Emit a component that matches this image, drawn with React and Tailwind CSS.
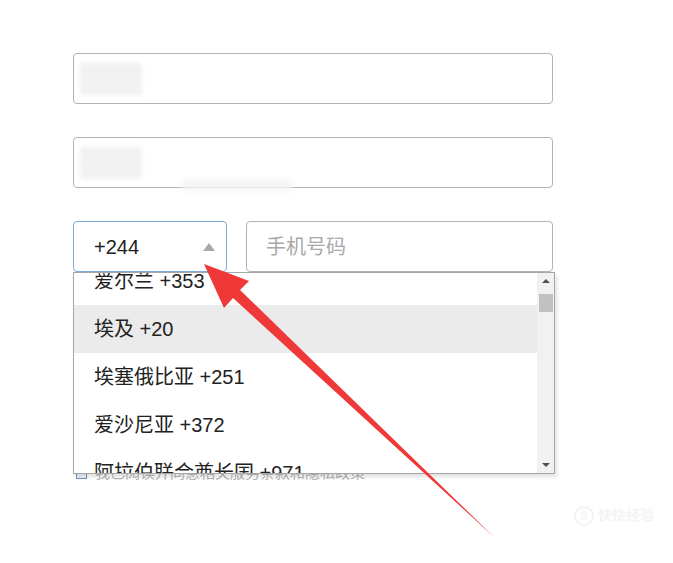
import React from 'react';

const options = [
  { name: '爱尔兰', code: '+353' },
  { name: '埃及', code: '+20', active: true },
  { name: '埃塞俄比亚', code: '+251' },
  { name: '爱沙尼亚', code: '+372' },
  { name: '阿拉伯联合酋长国', code: '+971' },
];

const font = 'font-["Liberation_Sans","Noto_Sans_CJK_SC",sans-serif]';

const BlurInput = ({ smudge }) => (
  <div className="h-[51px] border border-[#b3b3b3] rounded-[4px] bg-white flex items-center pl-[6px]">
    <div className="w-[62px] h-[32px] bg-[#f1f1f1] rounded-[3px] blur-[2px]" />
    {smudge && <div className="ml-[40px] mt-[44px] w-[110px] h-[10px] bg-[#f3f3f3] blur-[3px]" />}
  </div>
);

const App = () => {
  return (
    <div className={`relative w-[673px] h-[563px] bg-white overflow-hidden pt-[53px] pl-[73px] ${font}`}>
      <div className="w-[480px] flex flex-col gap-[33px]">
        <BlurInput />
        <BlurInput smudge />

        <div className="relative">
          <div className="flex gap-[19px]">
            <div className="w-[154px] h-[51px] border border-[#7ea9d8] rounded-[4px] flex items-center justify-between pl-[20px] pr-[11px]">
              <span className="text-[20px] text-[#222]">+244</span>
              <span className="w-0 h-0 border-l-[6px] border-r-[6px] border-b-[8px] border-l-transparent border-r-transparent border-b-[#a9a9a9]" />
            </div>
            <div className="flex-1 h-[51px] border border-[#b3b3b3] rounded-[4px] flex items-center pl-[19px]">
              <span className="text-[20px] text-[#a9a9a9]">手机号码</span>
            </div>
          </div>

          <div className="mt-[192px] flex items-center gap-[8px] pl-[3px]">
            <span className="w-[11px] h-[11px] border border-[#7a8fb8] bg-[#eef2fa]" />
            <span className="text-[15px] leading-[18px] text-[#b5b5b5]">我已阅读并同意相关服务条款和隐私政策</span>
          </div>

          <div className="absolute top-[51px] left-0 w-[482px] h-[202px] border border-[#a6a6a6] bg-white shadow-[2px_3px_4px_rgba(0,0,0,0.12)] flex overflow-hidden">
            <div className="flex-1 overflow-hidden">
              <div className="-mt-[16px]">
                {options.map(o => (
                  <div
                    key={o.code}
                    className={`h-[48px] flex items-center pl-[20px] text-[20px] text-[#222] ${o.active ? 'bg-[#ebebeb]' : ''}`}
                  >
                    {o.name} {o.code}
                  </div>
                ))}
              </div>
            </div>
            <div className="w-[17px] bg-[#f1f1f1] flex flex-col items-center">
              <span className="mt-[6px] w-0 h-0 border-l-[4px] border-r-[4px] border-b-[4px] border-l-transparent border-r-transparent border-b-[#505050]" />
              <span className="mt-[11px] w-[14px] h-[18px] bg-[#c1c1c1]" />
              <span className="mt-auto mb-[6px] w-0 h-0 border-l-[4px] border-r-[4px] border-t-[4px] border-l-transparent border-r-transparent border-t-[#505050]" />
            </div>
          </div>
        </div>
      </div>

      <div className="absolute left-[574px] top-[505px] flex items-center gap-[4px] text-[#f4f4f4]">
        <span className="w-[20px] h-[20px] rounded-full border-2 border-[#f2f2f2] text-[12px] font-bold flex items-center justify-center">S</span>
        <span className="text-[14px] font-bold">快快经验</span>
      </div>

      <svg className="absolute inset-0 pointer-events-none" width="673" height="563" viewBox="0 0 673 563">
        <polygon
          points="204,264 249,281 240,290 495,538 233,298 224,308"
          fill="#ef3838"
        />
      </svg>
    </div>
  );
};

export default App;
